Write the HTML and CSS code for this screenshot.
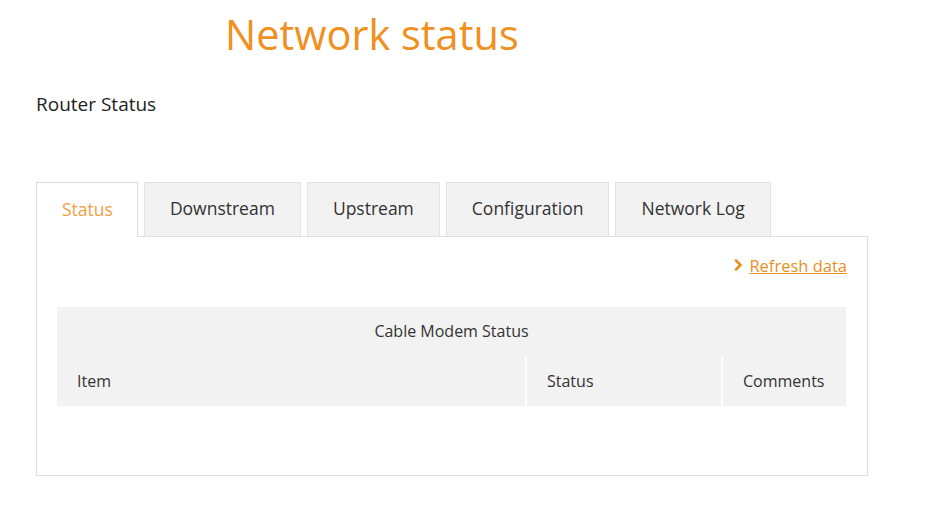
FILE: index.html
```html
<!DOCTYPE html>
<html lang="en">
<head>
<meta charset="utf-8">
<title>Network status</title>
<link rel="stylesheet" href="styles.css">
</head>
<body>
<div class="page">
  <h1 class="title">Network status</h1>
  <h2 class="subtitle">Router Status</h2>
  <div class="tabs">
    <div class="tab active">Status</div>
    <div class="tab">Downstream</div>
    <div class="tab">Upstream</div>
    <div class="tab">Configuration</div>
    <div class="tab">Network Log</div>
  </div>
  <div class="panel">
    <div class="refresh">
      <svg class="chev" width="9" height="12" viewBox="0 0 9 12"><path d="M2 1.5 L6.5 6 L2 10.5" fill="none" stroke="#e8901e" stroke-width="2.6" stroke-linecap="round" stroke-linejoin="round"/></svg>
      <a href="#" class="refresh-link">Refresh data</a>
    </div>
    <table class="status-table">
      <colgroup>
        <col class="c1"><col class="c2"><col class="c3">
      </colgroup>
      <thead>
        <tr><th colspan="3" class="caption-cell">Cable Modem Status</th></tr>
        <tr class="head-row">
          <th class="item">Item</th>
          <th class="sep">Status</th>
          <th class="sep">Comments</th>
        </tr>
      </thead>
    </table>
  </div>
</div>
</body>
</html>
```
FILE: styles.css
```css
* { box-sizing: border-box; }
body {
  margin: 0;
  background: #fff;
  font-family: "Open Sans", "Liberation Sans", sans-serif;
  color: #333;
}
.page {
  padding-left: 36px;
  width: 868px;
}
.title {
  margin: 0;
  padding: 7px 0 0 189px;
  font-size: 41.5px;
  font-weight: 400;
  line-height: 54px;
  color: #f0901e;
}
.subtitle {
  margin: 0;
  padding-top: 31px;
  font-size: 19px;
  font-weight: 400;
  line-height: 24px;
  color: #222;
}
.tabs {
  display: flex;
  gap: 6px;
  margin-top: 66px;
}
.tab {
  height: 54px;
  padding: 0 25px 3px;
  display: flex;
  align-items: center;
  font-size: 17.5px;
  color: #333;
  background: #f2f2f2;
  border: 1px solid #e2e2e2;
  border-bottom: none;
}
.tab.active {
  background: #fff;
  color: #f0a040;
  border-color: #dedede;
  position: relative;
  z-index: 1;
  height: 55px;
  margin-bottom: -1px;
  padding-right: 24px;
}
.panel {
  border: 1px solid #dedede;
  height: 240px;
  padding: 17px 20px 0 20px;
}
.refresh {
  display: flex;
  justify-content: flex-end;
  align-items: center;
  gap: 6px;
  height: 22px;
  font-size: 16.5px;
}
.refresh-link {
  color: #e8901e;
  text-decoration: underline;
}
.status-table {
  margin-top: 31px;
  width: 789px;
  border-collapse: collapse;
  table-layout: fixed;
  font-size: 16px;
  color: #333;
}
.c1 { width: 469px; }
.c2 { width: 196px; }
.c3 { width: 124px; }
.status-table th {
  background: #f2f2f2;
  font-weight: 400;
  text-align: left;
  padding: 0 20px 2px;
}
.caption-cell {
  height: 50px;
  text-align: center !important;
}
.head-row th {
  height: 49px;
}
.status-table th.sep {
  border-left: 2px solid #fff;
}
```
